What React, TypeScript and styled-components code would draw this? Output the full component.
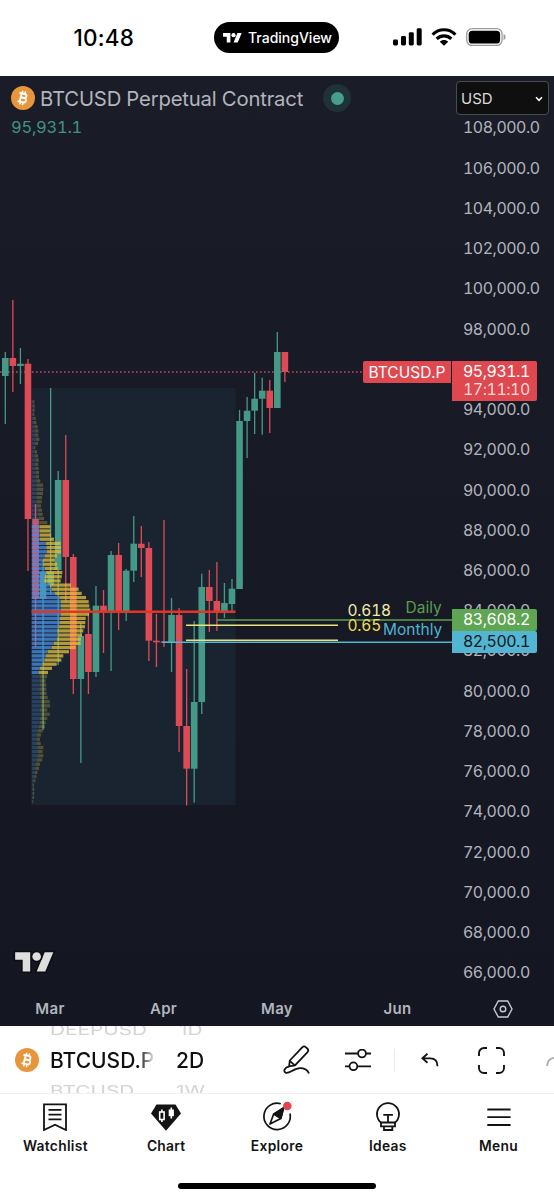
import React from "react";
import styled, { createGlobalStyle } from "styled-components";

const Global = createGlobalStyle`
  * { box-sizing: border-box; }
  html, body { margin: 0; padding: 0; background: #fff; }
  body { font-family: Inter, "Liberation Sans", sans-serif; overflow: hidden; }
  svg { display: block; flex: none; }
`;

const Screen = styled.div`
  width: 554px;
  height: 1200px;
  display: flex;
  flex-direction: column;
  background: #fff;
  overflow: hidden;
`;

/* ---------- status bar ---------- */

const StatusBar = styled.header`
  height: 76px;
  flex: none;
  display: grid;
  grid-template-columns: 214px 125px 1fr;
  align-items: center;
  padding-bottom: 1px;
`;
const Clock = styled.div`
  padding-left: 73.5px;
  font-size: 22.5px;
  font-weight: 550;
  letter-spacing: 0.2px;
  color: #000;
`;
const AppPill = styled.div`
  height: 31px;
  border-radius: 16px;
  background: #000;
  color: #fff;
  display: flex;
  align-items: center;
  gap: 5px;
  padding-left: 8px;
  font-size: 14px;
  font-weight: 500;
`;
const StatusIcons = styled.div`
  display: flex;
  align-items: center;
  gap: 9px;
  padding: 0 0 2px 54px;
`;

/* ---------- chart ---------- */

const ChartPanel = styled.section`
  position: relative;
  height: 950px;
  flex: none;
  display: grid;
  grid-template-columns: 452px 102px;
  grid-template-rows: 915px 35px;
  background: linear-gradient(#1a1c27, #171924 45%, #141621);
  font-variant-numeric: tabular-nums;
`;
const Plot = styled.div`
  position: relative;
`;
const Legend = styled.div`
  position: absolute;
  left: 11px;
  top: 8px;
`;
const LegendRow = styled.div`
  display: flex;
  align-items: center;
  height: 28px;
`;
const SymbolName = styled.span`
  margin-left: 5px;
  font-size: 20.3px;
  letter-spacing: -0.18px;
  color: #b2b5be;
  white-space: nowrap;
  width: 265px;
`;
const MarketDot = styled.span`
  width: 28px;
  height: 28px;
  border-radius: 50%;
  background: #1f3139;
  display: grid;
  place-items: center;
  margin-left: 18px;
  &::after {
    content: "";
    width: 13px;
    height: 13px;
    border-radius: 50%;
    background: #479e8b;
  }
`;
const LastPrice = styled.div`
  margin-top: 5px;
  font-size: 16.5px;
  line-height: 20px;
  letter-spacing: -0.25px;
  color: #3f9384;
`;
const Watermark = styled.div`
  position: absolute;
  left: 13px;
  top: 874px;
`;
const PriceAxis = styled.div`
  position: relative;
  padding: 5px 5px 0 4px;
  display: flex;
  flex-direction: column;
`;
const CurrencySelect = styled.div`
  height: 34px;
  border: 1px solid #4a4b50;
  border-radius: 4px;
  background: #0f0f0f;
  color: #dbdbdb;
  display: flex;
  align-items: center;
  justify-content: space-between;
  padding: 0 5px 0 4px;
  font-size: 15px;
`;
const Ticks = styled.div`
  margin-top: 3.4px;
  height: 865px;
  display: flex;
  flex-direction: column;
  justify-content: space-between;
  padding-left: 7px;
`;
const Tick = styled.span`
  font-size: 15.9px;
  line-height: 20px;
  letter-spacing: -0.45px;
  color: #b2b5be;
`;
const PriceBadge = styled.div<{ $top: number; $height: number; $bg: string; $fg: string }>`
  position: absolute;
  left: 0;
  top: ${(p) => p.$top}px;
  height: ${(p) => p.$height}px;
  width: 85px;
  padding-left: 11px;
  padding-bottom: 1px;
  border-radius: 0 2px 2px 0;
  background: ${(p) => p.$bg};
  color: ${(p) => p.$fg};
  display: flex;
  flex-direction: column;
  justify-content: center;
  font-size: 15.9px;
  line-height: 18px;
  letter-spacing: -0.45px;
`;
const Countdown = styled.span`
  opacity: 0.8;
`;
const SymbolBadge = styled.div`
  position: absolute;
  right: 1px;
  top: 285px;
  width: 88px;
  height: 22px;
  border-radius: 2px 0 0 2px;
  background: #e0484f;
  color: #fff;
  font-size: 15.5px;
  line-height: 23px;
  text-align: center;
`;
const TimeAxis = styled.div`
  display: grid;
  grid-template-columns: 100px 127px 100px 1fr;
  align-items: center;
  text-align: center;
  font-size: 15px;
  font-weight: 600;
  letter-spacing: 0.3px;
  color: #b2b5be;
`;
const Month = styled.span<{ $shift?: number }>`
  padding-left: ${(p) => p.$shift ?? 0}px;
`;
const AxisSettings = styled.div`
  display: flex;
  align-items: center;
  padding-left: 41px;
`;

/* ---------- toolbar ---------- */

const Toolbar = styled.div`
  height: 68px;
  flex: none;
  display: grid;
  grid-template-columns: 50px 126px 107px 62px 49px 84px 67px 9px;
  align-items: center;
  border-bottom: 1px solid #f0f1f3;
  overflow: hidden;
  color: #131313;
`;
const CoinSlot = styled.div`
  padding-left: 15px;
`;
const Picker = styled.div`
  height: 68px;
  display: flex;
  flex-direction: column;
  align-items: flex-start;
  justify-content: center;
  gap: 4px;
  overflow: hidden;
`;
const Choice = styled.span`
  flex: none;
  font-size: 21px;
  line-height: 28px;
  font-weight: 450;
  width: 103px;
  padding-top: 1px;
  overflow: hidden;
  white-space: nowrap;
  background: linear-gradient(90deg, #0f0f0f 86%, #d8d8d8 100%);
  background-clip: text;
  color: transparent;
`;
const Ghost = styled.span<{ $indent?: number }>`
  flex: none;
  padding-left: ${(p) => p.$indent ?? 0}px;
  font-size: 20.8px;
  line-height: 24px;
  color: #d4d4d4;
  white-space: nowrap;
  transform: scaleY(0.7);
`;
const Divider = styled.div`
  width: 1px;
  height: 23px;
  background: #ececee;
  margin-right: 26px;
`;
const UndoSlot = styled.div`
  display: flex;
  align-items: center;
`;

/* ---------- bottom navigation ---------- */

const Nav = styled.nav`
  display: grid;
  grid-template-columns: repeat(5, 1fr);
  height: 70px;
  flex: none;
`;
const NavItem = styled.div`
  display: flex;
  flex-direction: column;
  align-items: center;
  padding-top: 5px;
  gap: 6px;
  font-size: 13.8px;
  font-weight: 600;
  line-height: 18px;
  letter-spacing: 0.3px;
  color: #131313;
`;
const HomeIndicator = styled.div`
  width: 198px;
  height: 6px;
  border-radius: 3px;
  background: #000;
  margin: 19px auto 0 178px;
`;

/* ---------- data ---------- */

type Candle = [up: 0 | 1, high: number, top: number, bottom: number, low: number];

const candles: Candle[] = [
  [1, 352, 358, 376, 424], [0, 300, 358, 366, 392], [1, 348, 363.7, 366, 384], [0, 359, 363.7, 519, 571],
  [0, 504, 519, 599, 647], [1, 560, 572, 599, 730], [1, 388, 572, 585, 595], [1, 471, 480, 570, 665],
  [0, 435, 480, 557, 602], [0, 554, 557, 679, 694], [1, 623, 636, 679, 763], [0, 612, 634, 672, 694],
  [1, 586, 605.7, 672, 677], [0, 590, 605.7, 612, 653], [1, 551, 555, 612, 671], [0, 543, 555, 612, 630],
  [1, 569, 570.7, 612, 621], [1, 516, 543.7, 570.7, 582], [0, 526, 543.7, 548, 577], [0, 542, 548, 640.7, 661],
  [0, 614, 640.7, 642.3, 667], [0, 520, 641.5, 642.5, 647], [1, 598, 615, 642.7, 672], [0, 608, 615, 726, 752],
  [0, 669, 726, 768.7, 805.5], [1, 621, 702, 768.7, 802.7], [1, 573.7, 587, 702, 714], [0, 570, 587, 601, 632],
  [0, 562, 601, 611, 631], [1, 583, 603, 611, 618], [1, 579, 588.7, 604, 613], [1, 410, 421, 589, 589],
  [1, 397, 410.7, 421, 458], [1, 373, 398.7, 410.7, 434], [1, 377.7, 390.7, 398.7, 434.7], [0, 380, 390.7, 408, 433],
  [1, 332, 352, 408, 408], [0, 352, 352, 372, 382],
];

/* buy width / total width of each volume row */
const outerTop: [number, number][] = [
  [1, 2.6], [1.3, 3], [1.3, 3], [1, 2.6], [2, 4], [2, 4.6], [3, 6], [3.5, 6.6], [3.5, 6.6], [4, 7.6], [3.5, 6.3], [2, 3.6],
  [3, 5.3], [3.5, 6.3], [4, 7], [3.5, 6.6], [3.5, 7], [4, 7.3], [4, 7.3], [4.5, 8.6], [5, 11.3], [5, 11.6], [5, 11.3], [5, 10.3],
  [5, 10], [5, 9.3], [6, 10.3], [6, 11], [7, 12.3], [7.5, 15.6],
];
const valueArea: [number, number][] = [
  [7.7, 18.6], [7.7, 18.6], [8, 19.3], [8.3, 22.3], [14, 29], [14.6, 29.3], [15, 29.3], [13.3, 25.3], [11, 23.3], [11.6, 25.3],
  [13, 26], [14.3, 30.6], [13.3, 30], [12.6, 29], [18.3, 39.3], [20, 47], [23.3, 50], [27.6, 54.3], [29, 57], [29.3, 57.6],
  [29.3, 58.6], [29.3, 57.3], [28.3, 54], [27.6, 53.6], [27, 53.3], [25.6, 51.6], [26.6, 50.3], [25, 49.3], [22, 49],
  [20, 44], [16, 37.3], [14.3, 31.6], [12.6, 29.6], [11, 25], [8.3, 20.3], [7, 16.3],
];
const outerBottom: [number, number][] = [
  [8, 15.3], [8, 14], [8, 14.6], [7.5, 14.6], [8, 15], [8, 16], [9, 18], [9, 18.3], [8, 15.6], [9, 18], [8, 15.6], [8, 14],
  [7, 13.3], [6, 11], [5, 9.3], [5, 8.3], [5, 9], [6, 11.6], [6, 11], [6, 11.6], [5, 10.6], [4, 8.3], [3.5, 7.3], [3, 5.6],
  [2.5, 4.6], [2, 3.6], [1.2, 2.3], [1.2, 2.6], [1.2, 2.6], [1, 2.3], [0.8, 1.6],
];
const volumeRows = [
  ...outerTop.map((r) => ({ buy: r[0], total: r[1], inside: false })),
  ...valueArea.map((r) => ({ buy: r[0], total: r[1], inside: true })),
  ...outerBottom.map((r) => ({ buy: r[0], total: r[1], inside: false })),
];

const priceTicks = Array.from({ length: 22 }, (_, i) => `${108 - i * 2},000.0`);

/* ---------- icons ---------- */

const BitcoinIcon = ({ size = 24 }: { size?: number }) => (
  <svg width={size} height={size} viewBox="0 0 24 24">
    <circle cx="12" cy="12" r="12" fill="#e8963c" />
    <g transform="rotate(13 12 12)" fill="none" stroke="#fff" strokeWidth="1.9">
      <path d="M7.4 7.7h5.5a2.05 2.05 0 0 1 0 4.1H9.6M7.4 16.2h5.9a2.2 2.2 0 0 0 0-4.4H9.6M9.6 7.7v8.5" />
      <path d="M10.2 5v2.6M13 5v2.6M10.2 16.4V19M13 16.4V19" strokeWidth="1.5" />
    </g>
  </svg>
);

const TvLogo = ({ width, outline }: { width: number; outline?: boolean }) => (
  <svg width={width} height={(width * 22) / 40} viewBox="-2 2 40 22">
    <g
      fill={outline ? "#dedede" : "#fff"}
      stroke={outline ? "#0d0e13" : "none"}
      strokeWidth="3"
      paintOrder="stroke"
    >
      <path d="M14 22H7V11H0V4h14zM28 22h-8l7.5-18h8z" />
      <circle cx="20" cy="8" r="4" />
    </g>
  </svg>
);

const SignalIcon = () => (
  <svg width="29" height="18" viewBox="0 0 29 18">
    <rect x="0" y="11.5" width="5" height="6" rx="1.4" />
    <rect x="8" y="8" width="5" height="9.5" rx="1.4" />
    <rect x="15.8" y="4.2" width="5" height="13.3" rx="1.4" />
    <rect x="23.7" y="0.3" width="5" height="17.2" rx="1.4" />
  </svg>
);

const WifiIcon = () => (
  <svg width="26" height="18" viewBox="0 0 26 18">
    <g fill="none" stroke="#000" strokeWidth="3.1">
      <path d="M1.6 6.6C8 .2 18 .2 24.4 6.6" />
      <path d="M5.7 10.9c4.1-4 10.5-4 14.6 0" />
    </g>
    <path d="M8.8 13.7c2.4-2.2 6-2.2 8.4 0L13 17.8z" />
  </svg>
);

const BatteryIcon = () => (
  <svg width="40" height="18" viewBox="0 0 40 18">
    <rect x="0.7" y="0.7" width="35.4" height="16.8" rx="5.4" fill="none" stroke="#9b9b9b" strokeWidth="1.3" />
    <rect x="2.7" y="2.7" width="31.4" height="12.8" rx="3.6" />
    <path d="M37.6 6v6.2c1.3-.5 2-1.7 2-3.1s-.7-2.6-2-3.1z" fill="#9b9b9b" />
  </svg>
);

const PencilIcon = () => (
  <svg width="28" height="30" viewBox="0 0 28 30" fill="none" stroke="#131313" strokeWidth="1.8" strokeLinejoin="round">
    <path d="M6.8 15.5 19.2 2.3a2.7 2.7 0 0 1 3.8 0l1.3 1.2a2.7 2.7 0 0 1 0 3.8L12 20.3l-5.9 1z" />
    <path d="m6.8 15.8 5 4.5" />
    <path d="M6 21.7C1.5 22.2.2 26.3 2.6 27.6 6 29.2 11 23.2 17 23.2c4.3 0 7.6 1.8 9 5.3" />
  </svg>
);

const SlidersIcon = () => (
  <svg width="26" height="22" viewBox="0 0 26 22" fill="none" stroke="#131313" strokeWidth="1.8">
    <path d="M0 4.5h13M21 4.5h5M0 17.3h4.5M12.3 17.3H26" />
    <circle cx="17" cy="4.5" r="3.9" />
    <circle cx="8.4" cy="17.3" r="3.9" />
  </svg>
);

const UndoIcon = () => (
  <svg width="18" height="14" viewBox="0 0 18 14" fill="none" stroke="#131313" strokeWidth="1.8">
    <path d="M6.5.8 1.3 5.3l5.2 4.5M1.5 5.3h7.7c4.5 0 7.3 2.9 7.3 7.9" />
  </svg>
);

const FullscreenIcon = () => (
  <svg width="27" height="27" viewBox="0 0 27 27" fill="none" stroke="#131313" strokeWidth="1.9">
    <path d="M1 9V6a5 5 0 0 1 5-5h3M18 1h3a5 5 0 0 1 5 5v3M26 18v3a5 5 0 0 1-5 5h-3M9 26H6a5 5 0 0 1-5-5v-3" />
  </svg>
);

const RedoEdgeIcon = () => (
  <svg width="9" height="14" viewBox="0 0 9 14" fill="none" stroke="#a9a9a9" strokeWidth="1.8">
    <path d="M2 13c.3-5 3-7.7 7-8.2" />
  </svg>
);

const SettingsIcon = () => (
  <svg width="20" height="18" viewBox="0 0 20 18" fill="none" stroke="#c9cbd2" strokeWidth="1.4">
    <path d="M5.3 1h9.4L19 9l-4.3 8H5.3L1 9z" />
    <circle cx="10" cy="9" r="2.8" />
  </svg>
);

const WatchlistIcon = () => (
  <svg width="32" height="32" viewBox="0 0 32 32" fill="none" stroke="#131313" strokeWidth="1.8">
    <path d="M5 5.3h22V31l-11-5.3L5 31zM9.5 10.8h13M9.5 15.6h13M9.5 20.3h13" />
  </svg>
);

const ChartIcon = () => (
  <svg width="32" height="32" viewBox="0 0 32 32">
    <path d="M6.5 5.5h19L31 14.5l-15 17.3-15-17.3z" fill="#131313" />
    <g fill="none" stroke="#fff" strokeWidth="1.6">
      <rect x="9.7" y="13" width="4.4" height="7.5" />
      <path d="M11.9 10.5V13M11.9 20.5V23M21.3 8.5v11" />
    </g>
    <rect x="18.7" y="10.5" width="5.2" height="6.7" fill="#fff" />
  </svg>
);

const ExploreIcon = () => (
  <svg width="32" height="32" viewBox="0 0 32 32">
    <path d="M19.8 4.7A13.2 13.2 0 1 0 29 14.5" fill="none" stroke="#131313" strokeWidth="1.7" />
    <path d="M9 25 12.6 15.2l9.9-6.2-2.7 10.5z" fill="none" stroke="#131313" strokeWidth="1.7" strokeLinejoin="round" />
    <path d="m12.6 15.2 9.9-6.2-2.7 10.5z" fill="#131313" stroke="#131313" strokeWidth="1.5" strokeLinejoin="round" />
    <circle cx="26.3" cy="7" r="4.3" fill="#e5434f" />
  </svg>
);

const IdeasIcon = () => (
  <svg width="32" height="32" viewBox="0 0 32 32" fill="none" stroke="#131313" strokeWidth="1.8">
    <path d="M9.2 23.8a11 11 0 1 1 13.6 0" />
    <path d="M9 23.5h14v3.8H9zM12 27.3V31h8.3v-3.7M11.3 15.8h9.6M16 15.8v7.7" />
  </svg>
);

const MenuIcon = () => (
  <svg width="32" height="32" viewBox="0 0 32 32" stroke="#131313" strokeWidth="1.8">
    <path d="M4.3 10.500h23.300M4.3 18.2h23.300M4.3 26h23.300" />
  </svg>
);

/* ---------- chart drawing ---------- */

const UP = "#459a87";
const DOWN = "#dd4b56";

const ChartDrawing = () => (
  <svg width="452" height="915" viewBox="0 76 452 915">
    <rect x="31.5" y="388" width="204" height="417" fill="#1a2430" />
    <path d="M0 372H363" stroke="#b34c5f" strokeWidth="1.3" strokeDasharray="1.7 2.3" />
    {candles.map(([up, high, top, bottom, low], i) => {
      const x = 5.3 + i * 7.556;
      return (
        <g key={i} fill={up ? UP : DOWN}>
          <rect x={x - 0.65} y={high} width="1.3" height={low - high} />
          <rect x={x - 3.3} y={top} width="6.6" height={Math.max(bottom - top, 1.2)} />
        </g>
      );
    })}
    {volumeRows.map((row, i) => {
      const y = 400.2 + i * 4.165;
      return (
        <g key={i} opacity={row.inside ? 0.74 : 0.28}>
          <rect x="31.7" y={y} width={row.buy} height="3.2" fill="#4a90e8" />
          <rect x={31.7 + row.buy} y={y} width={row.total - row.buy} height="3.2" fill="#e8c33c" />
        </g>
      );
    })}
    <path d="M31.5 611.7H235.5" stroke="#e03427" strokeWidth="2.4" />
    <path d="M217 620H452" stroke="#5b9f4d" strokeWidth="1.5" />
    <path d="M186 625.2H338M186 640.2H338" stroke="#e9e07f" strokeWidth="1.6" />
    <path d="M162 642.2H452" stroke="#50b6d4" strokeWidth="1.4" />
    <g fontSize="15.5">
      <text x="347.5" y="615.5" fill="#f2ecab" letterSpacing="-0.2">0.618</text>
      <text x="347.5" y="631" fill="#f0df4c" letterSpacing="-0.2">0.65</text>
      <text x="405.5" y="613" fill="#5b9f4d">Daily</text>
      <text x="383" y="635.3" fill="#4fb3d1">Monthly</text>
    </g>
  </svg>
);

export default function App() {
  return (
    <Screen>
      <Global />
      <StatusBar>
        <Clock>10:48</Clock>
        <AppPill>
          <TvLogo width={21} />
          TradingView
        </AppPill>
        <StatusIcons>
          <SignalIcon />
          <WifiIcon />
          <BatteryIcon />
        </StatusIcons>
      </StatusBar>

      <ChartPanel>
        <Plot>
          <ChartDrawing />
          <Legend>
            <LegendRow>
              <BitcoinIcon size={24} />
              <SymbolName>BTCUSD Perpetual Contract</SymbolName>
              <MarketDot />
            </LegendRow>
            <LastPrice>95,931.1</LastPrice>
          </Legend>
          <SymbolBadge>BTCUSD.P</SymbolBadge>
          <Watermark>
            <TvLogo width={43} outline />
          </Watermark>
        </Plot>
        <PriceAxis>
          <CurrencySelect>
            USD
            <svg width="8" height="4" viewBox="0 0 8 4" overflow="visible" fill="none" stroke="#fff" strokeWidth="1.6">
              <path d="m1 1.3 3 3 3-3" />
            </svg>
          </CurrencySelect>
          <Ticks>
            {priceTicks.map((t) => (
              <Tick key={t}>{t}</Tick>
            ))}
          </Ticks>
          <PriceBadge $top={285} $height={40} $bg="#e0484f" $fg="#fff">
            95,931.1
            <Countdown>17:11:10</Countdown>
          </PriceBadge>
          <PriceBadge $top={533} $height={22} $bg="#5ea653" $fg="#fff">83,608.2</PriceBadge>
          <PriceBadge $top={555} $height={22} $bg="#52b5d1" $fg="#10151c">82,500.1</PriceBadge>
        </PriceAxis>
        <TimeAxis>
          <Month>Mar</Month>
          <Month>Apr</Month>
          <Month>May</Month>
          <Month $shift={16}>Jun</Month>
        </TimeAxis>
        <AxisSettings>
          <SettingsIcon />
        </AxisSettings>
      </ChartPanel>

      <Toolbar>
        <CoinSlot><BitcoinIcon size={24} /></CoinSlot>
        <Picker>
          <Ghost>DEEPUSD</Ghost>
          <Choice>BTCUSD.P</Choice>
          <Ghost>BTCUSD</Ghost>
        </Picker>
        <Picker>
          <Ghost $indent={3}>1D</Ghost>
          <Choice>2D</Choice>
          <Ghost>1W</Ghost>
        </Picker>
        <PencilIcon />
        <SlidersIcon />
        <UndoSlot>
          <Divider />
          <UndoIcon />
        </UndoSlot>
        <FullscreenIcon />
        <RedoEdgeIcon />
      </Toolbar>

      <Nav>
        <NavItem><WatchlistIcon />Watchlist</NavItem>
        <NavItem><ChartIcon />Chart</NavItem>
        <NavItem><ExploreIcon />Explore</NavItem>
        <NavItem><IdeasIcon />Ideas</NavItem>
        <NavItem><MenuIcon />Menu</NavItem>
      </Nav>
      <HomeIndicator />
    </Screen>
  );
}
